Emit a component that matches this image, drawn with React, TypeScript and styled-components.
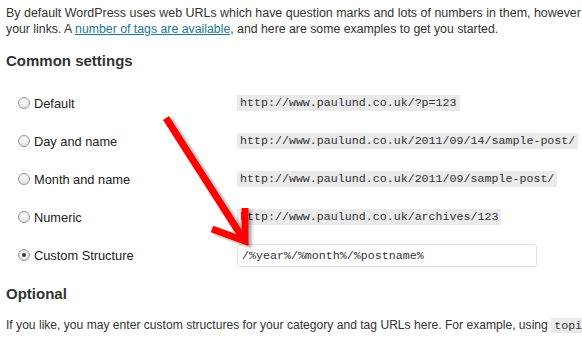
import React from "react";
import styled, { createGlobalStyle } from "styled-components";

const Global = createGlobalStyle`
  html, body { margin: 0; padding: 0; overflow: hidden; background: #fff; }
  body { font-family: "Liberation Sans", Arial, sans-serif; font-size: 13px; color: #333; }
`;

const Page = styled.div`
  position: relative;
  width: 582px;
  height: 341px;
  overflow: hidden;
  padding: 5px 0 0 6px;
  box-sizing: border-box;
`;

const Intro = styled.p`
  margin: 0;
  line-height: 16px;
  font-size: 12.3px;
  white-space: nowrap;
`;

const Line = styled.span<{ $size?: number }>`
  display: block;
  font-size: ${(p) => p.$size ?? 12.3}px;
`;

const Link = styled.a`
  color: #21759b;
  text-decoration: underline;
`;

const Heading = styled.h3`
  margin: 15px 0 0;
  font-size: 15px;
  font-weight: bold;
  line-height: 18px;
  color: #333;
`;

const Options = styled.div`
  margin-top: 14px;
  display: grid;
  grid-template-columns: 231px 1fr;
  grid-auto-rows: 38px;
`;

const LabelCell = styled.label`
  display: flex;
  align-items: center;
  gap: 4px;
  padding-left: 12px;
  font-size: 12.8px;
  color: #222;
`;

const Radio = styled.span<{ $checked?: boolean }>`
  width: 10px;
  height: 10px;
  border-radius: 50%;
  border: 1px solid #9a9a9a;
  background: radial-gradient(circle at 50% 35%, #fdfdfd 0%, #e4e4e4 70%, #cfcfcf 100%);
  display: flex;
  align-items: center;
  justify-content: center;
  flex: none;
  &::after {
    content: "";
    width: 4px;
    height: 4px;
    border-radius: 50%;
    background: ${(p) => (p.$checked ? "#3a3a3a" : "transparent")};
  }
`;

const ValueCell = styled.div`
  display: flex;
  align-items: center;
`;

const Code = styled.code`
  font-family: "Liberation Mono", "Courier New", monospace;
  font-size: 11.65px;
  background: #eaeaea;
  color: #333;
  padding: 1px 3px;
  line-height: 14px;
  white-space: nowrap;
`;

const Input = styled.input`
  width: 300px;
  height: 23px;
  box-sizing: border-box;
  border: 1px solid #dfdfdf;
  border-radius: 3px;
  padding: 0 4px;
  font-family: "Liberation Mono", "Courier New", monospace;
  font-size: 11.65px;
  color: #333;
  background: #fff;
  outline: none;
`;

const OptHeading = styled(Heading)`
  margin-top: 11px;
`;

const Para = styled.p`
  margin: 14px 0 0;
  line-height: 16px;
  white-space: nowrap;
  font-size: 12.1px;
`;

const Arrow = styled.svg`
  position: absolute;
  left: 0;
  top: 0;
  pointer-events: none;
  overflow: visible;
`;

const rows = [
  { label: "Default", value: "http://www.paulund.co.uk/?p=123" },
  { label: "Day and name", value: "http://www.paulund.co.uk/2011/09/14/sample-post/" },
  { label: "Month and name", value: "http://www.paulund.co.uk/2011/09/sample-post/" },
  { label: "Numeric", value: "http://www.paulund.co.uk/archives/123" },
];

export default function App() {
  return (
    <Page>
      <Global />
      <Intro>
        <Line $size={12.45}>
          By default WordPress uses web URLs which have question marks and lots of numbers in them, however WordPress offers you the ability to create a custom URL structure for your permalinks and archives.
        </Line>
        <Line>
          your links. A <Link href="#">number of tags are available</Link>, and here are some examples to get you started.
        </Line>
      </Intro>
      <Heading>Common settings</Heading>
      <Options>
        {rows.map((r) => (
          <React.Fragment key={r.label}>
            <LabelCell>
              <Radio />
              {r.label}
            </LabelCell>
            <ValueCell>
              <Code>{r.value}</Code>
            </ValueCell>
          </React.Fragment>
        ))}
        <LabelCell>
          <Radio $checked />
          Custom Structure
        </LabelCell>
        <ValueCell>
          <Input readOnly value="/%year%/%month%/%postname%" />
        </ValueCell>
      </Options>
      <OptHeading>Optional</OptHeading>
      <Para>
        If you like, you may enter custom structures for your category and tag URLs here. For example, using{" "}
        <Code>topics</Code>
      </Para>
      <Arrow width="582" height="341">
        <defs>
          <filter id="sh" x="-20%" y="-20%" width="140%" height="140%">
            <feDropShadow dx="3" dy="2" stdDeviation="1.5" floodColor="#000" floodOpacity="0.35" />
          </filter>
        </defs>
        <g filter="url(#sh)" stroke="#ff0000" fill="none" strokeWidth="7">
          <line x1="166" y1="118" x2="244" y2="240" strokeLinecap="butt" />
          <polyline points="212,229 245,241 245,208" strokeLinejoin="miter" strokeMiterlimit="10" />
        </g>
      </Arrow>
    </Page>
  );
}
